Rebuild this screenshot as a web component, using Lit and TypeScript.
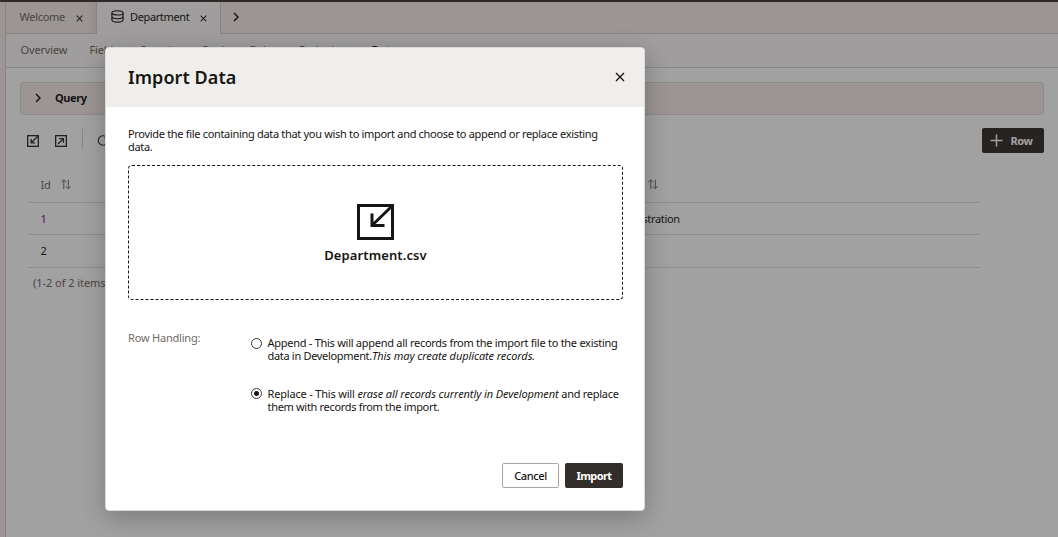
import { LitElement, html, css, svg } from "lit";
import { customElement, property } from "lit/decorators.js";

const cross = (size: number, stroke: number) => html`<svg width=${size} height=${size} viewBox="0 0 10 10" fill="none" stroke="currentColor" stroke-width=${stroke}><path d="M1 1 9 9M9 1 1 9"/></svg>`;
const chevron = html`<svg width="6" height="10" viewBox="0 0 6 10" fill="none" stroke="currentColor" stroke-width="1.5"><path d="M1 1 5 5 1 9"/></svg>`;
const sort = html`<svg width="10" height="11" viewBox="0 0 10 11" fill="none" stroke="currentColor" stroke-width="1"><path d="M2.8 10V.8M.3 3.3 2.8 .8 5.3 3.3M7.3 .5V9.8M4.8 7.3 7.3 9.8 9.8 7.3"/></svg>`;
const database = html`<svg width="13" height="13" viewBox="0 0 13 13" fill="none" stroke="currentColor" stroke-width="1.1"><ellipse cx="6.5" cy="2.9" rx="5.6" ry="2.1"/><path d="M.9 2.9V9.7C.9 11.2 3.2 12.1 6.5 12.1S12.1 11.2 12.1 9.7V2.9M.9 6.3C.9 7.8 3.2 8.7 6.5 8.7S12.1 7.8 12.1 6.3"/></svg>`;
const boxIcon = (out: boolean) => html`<svg width="12" height="12" viewBox="0 0 12 12" fill="none" stroke="currentColor" stroke-width="1.3"><rect x=".65" y=".65" width="10.7" height="10.7"/>${out
  ? svg`<path d="M3 9 8.4 3.6M4.3 3.6H8.4V7.7"/>`
  : svg`<path d="M10.8 1.2 4.2 7.8M4.2 4V7.8H8"/>`}</svg>`;

@customElement("data-workspace")
class DataWorkspace extends LitElement {
  static styles = css`
    :host { display: flex; height: 100%; background: #fff; }
    svg { display: block; flex: none; }
    .rail { width: 5px; background: #f4ecea; border-right: 1px solid #d5cfcb; flex: none; }
    .main { flex: 1; min-width: 0; }
    .tabs { display: flex; height: 31px; background: #f4ecea; border-bottom: 1px solid #d5cfcb; color: #6b6763; }
    .tab { display: flex; align-items: center; height: 32px; box-sizing: border-box; padding-bottom: 4px; }
    .close { margin-top: 4px; color: #2c2927; }
    .welcome { width: 91px; padding-left: 13.5px; gap: 11px; letter-spacing: -.28px; border-right: 1px solid #d5cfcb; height: 31px; padding-bottom: 3px; background: linear-gradient(90deg, #d8d0cc00 80px, #cfc8c466); }
    .active { width: 124px; padding-left: 14px; background: #fbf9f8; color: #161513; border-right: 1px solid #d5cfcb; letter-spacing: -.37px; }
    .active .label { margin: 0 11px 0 6px; }
    .next { color: #161513; padding-left: 12px; padding-bottom: 2px; }
    .sub { display: flex; gap: 22px; height: 33px; line-height: 32px; padding-left: 14.5px; background: #fbf9f8; border-bottom: 1px solid #d5d4d2; color: #6b6763; letter-spacing: -.14px; white-space: nowrap; }
    .sub b { color: #161513; }
    .query { display: flex; align-items: center; gap: 14px; margin: 14px 14px 0; height: 33px; box-sizing: border-box; border: 1px solid #dfd8d5; border-radius: 3px; background: #f4ecea; padding: 0 0 2px 14px; font-weight: 700; letter-spacing: -.4px; color: #161513; }
    .tools { display: flex; align-items: center; margin: 13px 14px 0 21px; height: 25px; color: #2c2927; }
    .tools .second { margin-left: 16px; }
    .rule { width: 1px; height: 20px; background: #d5d4d2; margin: -4px 14px 0 15px; }
    .add { margin-left: auto; display: flex; align-items: center; width: 62px; height: 25px; box-sizing: border-box; padding-left: 8px; gap: 7.5px; background: #312d2a; color: #fff; border-radius: 2px; font-weight: 700; letter-spacing: -.4px; }
    .table { width: 952px; margin: 13px 0 0 22px; }
    .row { display: grid; grid-template-columns: 567px 1fr; height: 32px; align-items: center; box-sizing: border-box; border-bottom: 1px solid #dedede; padding-left: 12.5px; letter-spacing: -.3px; }
    .head { height: 37px; color: #6f6b67; letter-spacing: -.3px; }
    .head span { display: flex; gap: 11px; align-items: center; }
    .head .far { padding-left: 40.5px; }
    .last { height: 33px; padding-bottom: 2px; }
    .key { color: #79107a; }
    .count { margin: 7px 0 0 27px; color: #6b6763; line-height: 15px; letter-spacing: -.05px; }
  `;
  render() {
    return html`
      <div class="rail"></div>
      <div class="main">
        <div class="tabs">
          <div class="tab welcome"><span>Welcome</span><span class="close">${cross(7, 1.5)}</span></div>
          <div class="tab active">${database}<span class="label">Department</span><span class="close">${cross(7, 1.5)}</span></div>
          <div class="tab next">${chevron}</div>
        </div>
        <div class="sub"><span>Overview</span><span>Fields</span><span>Security</span><span>Business Rules</span><span>Endpoints</span><b>Data</b></div>
        <div class="query">${chevron}<span>Query</span></div>
        <div class="tools">
          ${boxIcon(false)}<span class="second">${boxIcon(true)}</span><span class="rule"></span>
          <svg width="12" height="12" viewBox="0 0 12 12" fill="none" stroke="currentColor" stroke-width="1.1"><path d="M10 3A4.7 4.7 0 1 0 10.7 6M10.5 .5V3.5H7.5"/></svg>
          <div class="add"><svg width="13" height="13" viewBox="0 0 13 13" stroke="currentColor" stroke-width="1.5"><path d="M6.5 .5V12.5M.5 6.5H12.5"/></svg><span>Row</span></div>
        </div>
        <div class="table">
          <div class="row head"><span>Id ${sort}</span><span class="far">${sort}</span></div>
          <div class="row"><span class="key">1</span><span>Administration</span></div>
          <div class="row last"><span>2</span><span></span></div>
        </div>
        <div class="count">(1-2 of 2 items)</div>
      </div>`;
  }
}

@customElement("import-dialog")
class ImportDialog extends LitElement {
  @property() mode = "replace";
  static styles = css`
    :host { display: flex; flex-direction: column; box-sizing: border-box; background: #fff; border: 1px solid #dcdbda; border-radius: 4px; overflow: hidden; color: #161513; line-height: 13px; letter-spacing: -.315px; }
    svg { display: block; }
    header { display: flex; justify-content: space-between; align-items: center; height: 59px; box-sizing: border-box; padding: 0 19px 1px 22px; background: #f0eeec; flex: none; }
    h1 { margin: 0; font-size: 18px; line-height: 24px; font-weight: 600; letter-spacing: .07px; }
    .body { padding: 20px 21px 0 22px; }
    .intro { margin: 0; white-space: nowrap; }
    .drop { display: flex; flex-direction: column; align-items: center; box-sizing: border-box; height: 135px; margin-top: 12px; padding-top: 38px; border: 1px dashed #161513; border-radius: 4px; }
    .glyph { margin-right: 1px; }
    .file { margin-top: 6px; font-size: 13px; line-height: 18px; font-weight: 600; letter-spacing: .1px; }
    .form { display: grid; grid-template-columns: 123px 1fr; margin-top: 31px; white-space: nowrap; }
    .caption { color: #6f6b67; letter-spacing: -.2px; }
    .options { display: grid; gap: 24.5px; padding-top: 5px; }
    .option { display: flex; gap: 5.5px; }
    .radio { width: 9px; height: 9px; margin: 2px 0 0; border: 1px solid #3c3936; border-radius: 50%; display: grid; place-items: center; flex: none; }
    .radio.on { margin-top: 1px; }
    .radio.on::before { content: ""; width: 5px; height: 5px; border-radius: 50%; background: #161513; }
    .first { letter-spacing: -.27px; }
    .lead { letter-spacing: -.18px; }
    .tail { letter-spacing: -.26px; }
    i { letter-spacing: -.085px; }
    footer { display: flex; justify-content: flex-end; gap: 6px; margin-top: auto; padding: 0 21px 22px 0; }
    button { font: inherit; letter-spacing: -.4px; font-weight: 500; box-sizing: border-box; height: 25px; padding: 0 0 1px; border-radius: 2px; color: #161513; }
    .cancel { width: 57px; background: #fff; border: 1px solid #a9a7a5; }
    .import { width: 58px; background: #312d2a; border: 0; color: #fff; font-weight: 700; letter-spacing: -.6px; }
  `;
  render() {
    const dot = (v: string) => html`<span class="radio ${this.mode === v ? "on" : ""}"></span>`;
    return html`
      <header><h1>Import Data</h1>${cross(10, 1.3)}</header>
      <div class="body">
        <p class="intro">Provide the file containing data that you wish to import and choose to append or replace existing<br>data.</p>
        <div class="drop">
          <svg class="glyph" width="37" height="36" viewBox="0 0 37 36" fill="none" stroke="currentColor" stroke-width="3"><rect x="1.5" y="1.5" width="34" height="33"/><path d="M34 3 15 21.5M15 9.5V21.5H27.5"/></svg>
          <div class="file">Department.csv</div>
        </div>
        <div class="form">
          <span class="caption">Row Handling:</span>
          <div class="options">
            <div class="option">${dot("append")}<span><span class="first">Append - This will append all records from the import file to the existing</span><br>data in Development.<i>This may create duplicate records.</i></span></div>
            <div class="option">${dot("replace")}<span><span class="lead">Replace - This will </span><i>erase all records currently in Development</i><span class="tail"> and replace</span><br>them with records from the import.</span></div>
          </div>
        </div>
      </div>
      <footer><button class="cancel">Cancel</button><button class="import">Import</button></footer>`;
  }
}

@customElement("app-root")
class AppRoot extends LitElement {
  static styles = css`
    :host { display: flex; flex-direction: column; position: relative; height: 537px; overflow: hidden; font: 11px "Noto Sans", "Open Sans", sans-serif; color: #161513; }
    .bar { height: 2px; background: #3e3835; flex: none; }
    data-workspace { flex: 1; min-height: 0; }
    .scrim { position: absolute; inset: 0; background: rgba(22, 21, 19, .4); }
    import-dialog { position: absolute; left: 105px; top: 47px; width: 540px; height: 464px; box-shadow: 0 6px 24px rgba(0, 0, 0, .25); }
  `;
  render() {
    return html`<div class="bar"></div><data-workspace></data-workspace><div class="scrim"></div><import-dialog></import-dialog>`;
  }
}
